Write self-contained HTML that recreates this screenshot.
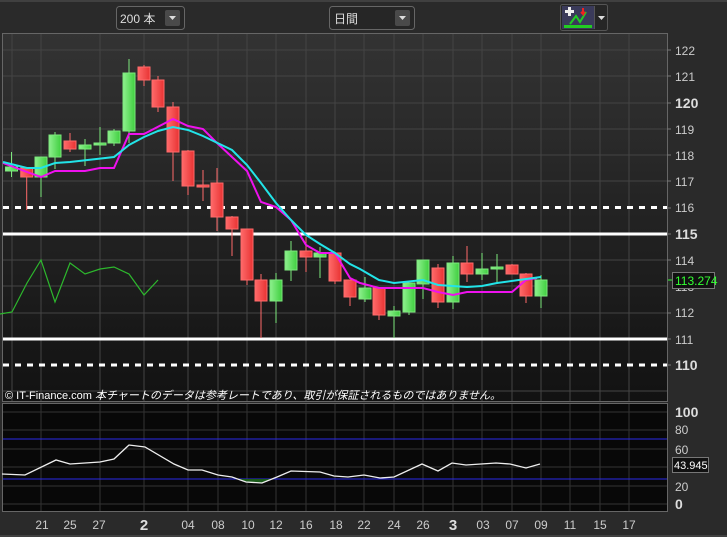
<!DOCTYPE html>
<html><head><meta charset="utf-8"><style>
html,body{margin:0;padding:0;background:#2a2a2a;width:727px;height:537px;overflow:hidden}
svg{display:block}
text{font-family:"Liberation Sans","Noto Sans CJK JP",sans-serif}
</style></head><body>
<svg width="727" height="537" viewBox="0 0 727 537" xmlns="http://www.w3.org/2000/svg">
<defs>
<linearGradient id="bg" x1="0" y1="0" x2="0" y2="1"><stop offset="0" stop-color="#333"/><stop offset="1" stop-color="#121212"/></linearGradient>
<linearGradient id="gb" x1="0" x2="1"><stop offset="0" stop-color="#8ef08e"/><stop offset="1" stop-color="#3fcf3f"/></linearGradient>
<linearGradient id="rb" x1="0" x2="1"><stop offset="0" stop-color="#ff6a6a"/><stop offset="1" stop-color="#e83333"/></linearGradient>
</defs>
<rect width="727" height="537" fill="#2a2a2a"/>
<line x1="0" y1="1" x2="727" y2="1" fill="none" stroke="#555"/>
<rect x="116.5" y="6.5" width="68" height="23" rx="3" fill="#262626" stroke="#666"/>
<text x="120" y="23" fill="#ddd" font-size="12">200 本</text>
<rect x="165" y="10" width="15" height="16" rx="2" fill="#4a4a4a"/>
<path d="M169 16h7l-3.5 4z" fill="#ddd"/>
<rect x="329.5" y="6.5" width="85" height="23" rx="3" fill="#262626" stroke="#666"/>
<text x="334" y="23" fill="#ddd" font-size="12">日間</text>
<rect x="395" y="10" width="15" height="16" rx="2" fill="#4a4a4a"/>
<path d="M399 16h7l-3.5 4z" fill="#ddd"/>
<rect x="560.5" y="4.5" width="47" height="26" rx="2" fill="#262626" stroke="#555"/>
<rect x="562" y="6" width="32" height="23" fill="#3a3a5a"/>
<path d="M565 10h3v-3h3v3h3v3h-3v3h-3v-3h-3z" fill="#eee"/>
<path d="M570 24l6-8 4 6 6-10" stroke="#2c2" stroke-width="2" fill="none"/>
<path d="M583 8v6l-2-2m2 2l2-2" stroke="#e22" stroke-width="2" fill="none"/>
<rect x="564" y="25" width="28" height="3" fill="#2c2"/>
<line x1="594.5" y1="6" x2="594.5" y2="29" stroke="#555"/>
<path d="M598 16h7l-3.5 4z" fill="#ddd"/>
<rect x="2.5" y="33.5" width="665" height="368" fill="url(#bg)" stroke="#666"/>
<g stroke="#444" stroke-width="1">
<line x1="3" y1="50" x2="667" y2="50"/><line x1="3" y1="76" x2="667" y2="76"/><line x1="3" y1="103" x2="667" y2="103"/><line x1="3" y1="129" x2="667" y2="129"/><line x1="3" y1="155" x2="667" y2="155"/><line x1="3" y1="181" x2="667" y2="181"/><line x1="3" y1="260" x2="667" y2="260"/><line x1="3" y1="286" x2="667" y2="286"/><line x1="3" y1="313" x2="667" y2="313"/><line x1="3" y1="391" x2="667" y2="391"/>
<line x1="12" y1="34" x2="12" y2="401"/><line x1="41" y1="34" x2="41" y2="401"/><line x1="100" y1="34" x2="100" y2="401"/><line x1="144" y1="34" x2="144" y2="401"/><line x1="188" y1="34" x2="188" y2="401"/><line x1="218" y1="34" x2="218" y2="401"/><line x1="247" y1="34" x2="247" y2="401"/><line x1="276" y1="34" x2="276" y2="401"/><line x1="306" y1="34" x2="306" y2="401"/><line x1="335" y1="34" x2="335" y2="401"/><line x1="364" y1="34" x2="364" y2="401"/><line x1="394" y1="34" x2="394" y2="401"/><line x1="423" y1="34" x2="423" y2="401"/><line x1="453" y1="34" x2="453" y2="401"/><line x1="482" y1="34" x2="482" y2="401"/><line x1="512" y1="34" x2="512" y2="401"/><line x1="541" y1="34" x2="541" y2="401"/><line x1="570" y1="34" x2="570" y2="401"/><line x1="600" y1="34" x2="600" y2="401"/><line x1="629" y1="34" x2="629" y2="401"/>
</g>
<line x1="3" y1="207.5" x2="667" y2="207.5" stroke="#fff" stroke-width="3" stroke-dasharray="6 6"/>
<line x1="3" y1="365" x2="667" y2="365" stroke="#fff" stroke-width="3" stroke-dasharray="6 6"/>
<line x1="3" y1="234" x2="667" y2="234" stroke="#fff" stroke-width="3"/>
<line x1="3" y1="339" x2="667" y2="339" stroke="#fff" stroke-width="3"/>
<polyline points="0,314 12,312 27,283 41,260 55,302 70,263 85,274 100,269 114,267 129,274 144,295 158,280" fill="none" stroke="#2db82d" stroke-width="1.2"/>
<g stroke-width="1">
<g stroke="#7de87d" fill="url(#gb)">
<line x1="11.5" y1="152" x2="11.5" y2="177"/><rect x="5.5" y="167" width="12" height="4"/>
<line x1="41" y1="157" x2="41" y2="197"/><rect x="35" y="157" width="12" height="20"/>
<line x1="55" y1="132" x2="55" y2="169"/><rect x="49" y="135" width="12" height="22"/>
<line x1="85" y1="139" x2="85" y2="166"/><rect x="79" y="145" width="12" height="4"/>
<line x1="100" y1="127" x2="100" y2="155"/><rect x="94" y="143" width="12" height="2"/>
<line x1="114" y1="129" x2="114" y2="146"/><rect x="108" y="131" width="12" height="12"/>
<line x1="129" y1="59" x2="129" y2="143"/><rect x="123" y="73" width="12" height="58"/>
<line x1="276" y1="273" x2="276" y2="323"/><rect x="270" y="280" width="12" height="21"/>
<line x1="291" y1="241" x2="291" y2="281"/><rect x="285" y="251" width="12" height="19"/>
<line x1="320" y1="247" x2="320" y2="278"/><rect x="314" y="253" width="12" height="4"/>
<line x1="365" y1="277" x2="365" y2="302"/><rect x="359" y="288" width="12" height="11"/>
<line x1="394" y1="306" x2="394" y2="338"/><rect x="388" y="311" width="12" height="5"/>
<line x1="409" y1="283" x2="409" y2="315"/><rect x="403" y="283" width="12" height="29"/>
<line x1="423" y1="260" x2="423" y2="299"/><rect x="417" y="260" width="12" height="24"/>
<line x1="453" y1="256" x2="453" y2="309"/><rect x="447" y="263" width="12" height="39"/>
<line x1="482" y1="253" x2="482" y2="280"/><rect x="476" y="269" width="12" height="5"/>
<line x1="497" y1="254" x2="497" y2="284"/><rect x="491" y="267" width="12" height="2"/>
<line x1="541" y1="275" x2="541" y2="308"/><rect x="535" y="280" width="12" height="16"/>
</g>
<g stroke="#ff6a6a" fill="url(#rb)">
<line x1="26.7" y1="168" x2="26.7" y2="210"/><rect x="20.7" y="168" width="12" height="9"/>
<line x1="70" y1="133" x2="70" y2="152"/><rect x="64" y="141" width="12" height="8"/>
<line x1="144" y1="65" x2="144" y2="86"/><rect x="138" y="67" width="12" height="13"/>
<line x1="158" y1="76" x2="158" y2="112"/><rect x="152" y="80" width="12" height="27"/>
<line x1="173" y1="102" x2="173" y2="181"/><rect x="167" y="107" width="12" height="45"/>
<line x1="188" y1="150" x2="188" y2="195"/><rect x="182" y="151" width="12" height="35"/>
<line x1="203" y1="170" x2="203" y2="201"/><rect x="197" y="185" width="12" height="2"/>
<line x1="217" y1="168" x2="217" y2="231"/><rect x="211" y="183" width="12" height="34"/>
<line x1="232" y1="216" x2="232" y2="256"/><rect x="226" y="217" width="12" height="12"/>
<line x1="247" y1="229" x2="247" y2="285"/><rect x="241" y="229" width="12" height="51"/>
<line x1="261" y1="274" x2="261" y2="338"/><rect x="255" y="280" width="12" height="21"/>
<line x1="306" y1="237" x2="306" y2="272"/><rect x="300" y="251" width="12" height="6"/>
<line x1="335" y1="253" x2="335" y2="284"/><rect x="329" y="253" width="12" height="28"/>
<line x1="350" y1="280" x2="350" y2="306"/><rect x="344" y="280" width="12" height="17"/>
<line x1="379" y1="287" x2="379" y2="320"/><rect x="373" y="288" width="12" height="27"/>
<line x1="438" y1="264" x2="438" y2="308"/><rect x="432" y="268" width="12" height="34"/>
<line x1="467" y1="246" x2="467" y2="282"/><rect x="461" y="263" width="12" height="11"/>
<line x1="512" y1="264" x2="512" y2="274"/><rect x="506" y="265" width="12" height="9"/>
<line x1="526" y1="273" x2="526" y2="303"/><rect x="520" y="274" width="12" height="22"/>
</g>
</g>
<polyline points="3,163 27,172 41,177 55,171 85,171 100,168 114,168 129,134 144,134 173,119 188,126 203,129 217,143 232,157 247,171 261,202 276,207 291,220 306,245 320,253 335,253 350,278 360,283 379,288 423,288 438,292 453,295 467,292 512,292 526,280 537,278" fill="none" stroke="#ee11ee" stroke-width="2"/>
<polyline points="3,162 27,168 41,168 55,163 70,162 114,157 129,145 144,137 158,131 173,127 188,130 203,136 232,150 247,165 261,183 276,203 291,220 306,235 320,244 335,253 350,264 360,269 379,280 394,283 423,280 438,285 467,287 482,286 497,283 526,279 541,277" fill="none" stroke="#22e4e8" stroke-width="2"/>
<g fill="#ccc" font-size="12">
<text x="675" y="55">122</text><text x="675" y="81">121</text><text x="675" y="134">119</text><text x="675" y="160">118</text><text x="675" y="186">117</text><text x="675" y="212">116</text><text x="675" y="265">114</text><text x="675" y="291">113</text><text x="675" y="317">112</text><text x="675" y="344">111</text>
</g>
<g fill="#ddd" font-size="14" font-weight="bold"><text x="675" y="108">120</text><text x="675" y="239">115</text><text x="675" y="370">110</text></g>
<g stroke="#777"><line x1="667" y1="50" x2="671" y2="50"/><line x1="667" y1="76" x2="671" y2="76"/><line x1="667" y1="103" x2="671" y2="103"/><line x1="667" y1="129" x2="671" y2="129"/><line x1="667" y1="155" x2="671" y2="155"/><line x1="667" y1="181" x2="671" y2="181"/><line x1="667" y1="208" x2="671" y2="208"/><line x1="667" y1="234" x2="671" y2="234"/><line x1="667" y1="260" x2="671" y2="260"/><line x1="667" y1="313" x2="671" y2="313"/><line x1="667" y1="339" x2="671" y2="339"/><line x1="667" y1="365" x2="671" y2="365"/></g>
<line x1="668" y1="280" x2="672" y2="280" stroke="#3f3"/>
<rect x="672.5" y="272.5" width="42" height="16" fill="#111" stroke="#777"/>
<text x="675" y="285" fill="#3f3" font-size="12">113.274</text>
<text x="5" y="399" fill="#fff" font-size="11">© IT-Finance.com <tspan font-style="italic">本チャートのデータは参考レートであり、取引が保証されるものではありません。</tspan></text>
<rect x="2.5" y="403.5" width="665" height="108" fill="#080808" stroke="#666"/>
<g stroke="#333"><line x1="3" y1="412" x2="667" y2="412"/><line x1="3" y1="504" x2="667" y2="504"/><line x1="3" y1="430" x2="667" y2="430"/><line x1="3" y1="449" x2="667" y2="449"/><line x1="3" y1="467" x2="667" y2="467"/><line x1="3" y1="486" x2="667" y2="486"/>
<line x1="41" y1="404" x2="41" y2="511"/><line x1="100" y1="404" x2="100" y2="511"/><line x1="144" y1="404" x2="144" y2="511"/><line x1="188" y1="404" x2="188" y2="511"/><line x1="218" y1="404" x2="218" y2="511"/><line x1="247" y1="404" x2="247" y2="511"/><line x1="276" y1="404" x2="276" y2="511"/><line x1="306" y1="404" x2="306" y2="511"/><line x1="335" y1="404" x2="335" y2="511"/><line x1="364" y1="404" x2="364" y2="511"/><line x1="394" y1="404" x2="394" y2="511"/><line x1="423" y1="404" x2="423" y2="511"/><line x1="453" y1="404" x2="453" y2="511"/><line x1="482" y1="404" x2="482" y2="511"/><line x1="512" y1="404" x2="512" y2="511"/><line x1="541" y1="404" x2="541" y2="511"/><line x1="570" y1="404" x2="570" y2="511"/><line x1="600" y1="404" x2="600" y2="511"/><line x1="629" y1="404" x2="629" y2="511"/></g>
<line x1="3" y1="439" x2="667" y2="439" stroke="#2a2ae8"/>
<line x1="3" y1="479" x2="667" y2="479" stroke="#2a2ae8"/>
<path d="M238,479 L246,482 L262,483 L272,479 Z" fill="#1a5a1a"/>
<polyline points="2,474 25,475 56,460 70,464 100,462 114,459 129,445 145,447 174,464 188,470 202,470 218,475 232,477 246,482 262,483 277,477 291,471 320,472 334,476 348,477 364,475 380,478 394,477 422,464 438,471 452,463 466,465 496,463 510,464 526,468 540,464" fill="none" stroke="#eee" stroke-width="1.3"/>
<g fill="#ccc" font-size="12"><text x="675" y="434">80</text><text x="675" y="454">60</text><text x="675" y="491">20</text></g>
<g fill="#ddd" font-size="14" font-weight="bold"><text x="675" y="417">100</text><text x="675" y="509">0</text></g>
<rect x="672.5" y="457.5" width="36" height="15" fill="#111" stroke="#777"/>
<text x="674" y="469" fill="#fff" font-size="11">43.945</text>
<g fill="#ccc" font-size="12" text-anchor="middle">
<text x="42" y="529">21</text><text x="70" y="529">25</text><text x="99" y="529">27</text><text x="188" y="529">04</text><text x="218" y="529">08</text><text x="248" y="529">10</text><text x="276" y="529">12</text><text x="306" y="529">16</text><text x="336" y="529">18</text><text x="364" y="529">22</text><text x="394" y="529">24</text><text x="423" y="529">26</text><text x="483" y="529">03</text><text x="512" y="529">07</text><text x="541" y="529">09</text><text x="570" y="529">11</text><text x="600" y="529">15</text><text x="629" y="529">17</text>
</g>
<g fill="#ddd" font-size="15" font-weight="bold" text-anchor="middle"><text x="144" y="530">2</text><text x="453" y="530">3</text></g>
<line x1="0" y1="536" x2="727" y2="536" stroke="#555"/>
</svg>
</body></html>
